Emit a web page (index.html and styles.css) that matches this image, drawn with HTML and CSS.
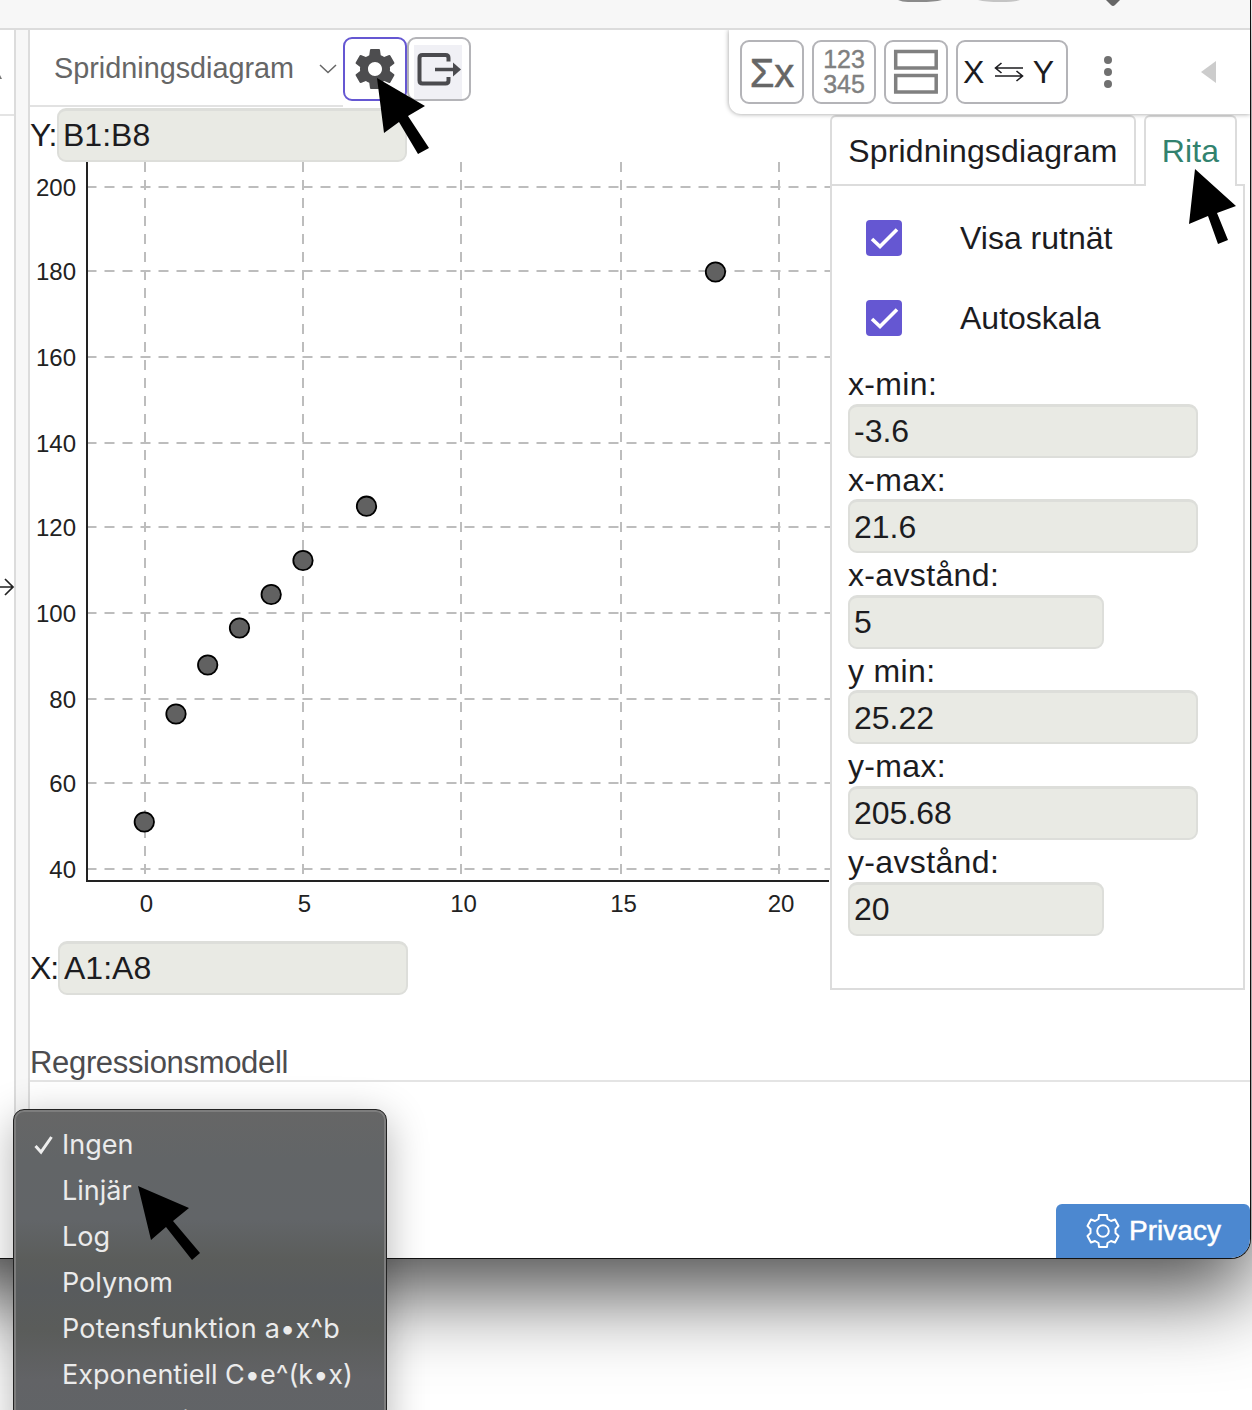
FILE: index.html
```html
<!doctype html>
<html lang="sv">
    <head>
        <meta charset="UTF-8">
        <meta name="viewport" content="width=device-width, initial-scale=1.0">
        <title>Spridningsdiagram</title>
        <link rel="stylesheet" href="styles.css">
    </head>
    <body>
        <div class="window">
            <header class="top-bar">
                <svg width="260" height="8" viewBox="890 0 260 8">
                    <path d="M898 0H942Q934 2 920 2H908Q902 2 898 0Z" fill="#8a8a8a"/>
                    <path d="M978 0H1020Q1016 2 1000 2Q986 2 978 0Z" fill="#c4c4c4"/>
                    <path d="M1106 0H1120L1115 5Q1113 7 1111 5Z" fill="#666"/>
                </svg>
            </header>

            <div class="content">
                <div class="left-view">
                    <div class="left-bar">
                        <svg width="2" height="6"><path d="M0 1L2 5H0Z" fill="#777"/></svg>
                    </div>
                    <svg class="left-arrow" width="15" height="20" viewBox="0 0 15 20">
                        <path d="M0 10H13M5 2L13 10L5 18" fill="none" stroke="#222" stroke-width="1.7"/>
                    </svg>
                </div>
                <div class="divider"></div>

                <main class="data-view">
                    <div class="toolbars">
                        <div class="plot-select">
                            <span>Spridningsdiagram</span>
                            <svg width="18" height="12" viewBox="0 0 18 12"><path d="M1 2L9 9.5L17 2" fill="none" stroke="#666" stroke-width="1.5"/></svg>
                        </div>
                        <button class="tool active">
                            <svg width="48" height="48" viewBox="0 0 24 24"><path fill="#4d4d4f" d="M19.43 12.98c.04-.32.07-.64.07-.98s-.03-.66-.07-.98l2.11-1.65c.19-.15.24-.42.12-.64l-2-3.46c-.12-.22-.39-.3-.61-.22l-2.49 1c-.52-.4-1.08-.73-1.69-.98l-.38-2.65C14.46 2.18 14.25 2 14 2h-4c-.25 0-.46.18-.49.42l-.38 2.65c-.61.25-1.17.59-1.69.98l-2.49-1c-.23-.09-.49 0-.61.22l-2 3.46c-.13.22-.07.49.12.64l2.11 1.65c-.04.32-.07.65-.07.98s.03.66.07.98l-2.11 1.65c-.19.15-.24.42-.12.64l2 3.46c.12.22.39.3.61.22l2.49-1c.52.4 1.08.73 1.69.98l.38 2.65c.03.24.24.42.49.42h4c.25 0 .46-.18.49-.42l.38-2.65c.61-.25 1.17-.59 1.69-.98l2.49 1c.23.09.49 0 .61-.22l2-3.46c.12-.22.07-.49-.12-.64l-2.11-1.65zM12 15.5c-1.93 0-3.5-1.57-3.5-3.5s1.57-3.5 3.5-3.5 3.5 1.57 3.5 3.5-1.57 3.5-3.5 3.5z"/></svg>
                        </button>
                        <button class="tool export">
                            <svg width="48" height="54" viewBox="0 0 48 54">
                                <rect width="48" height="54" fill="#f0f0f5"/>
                                <path d="M34.500 16.500V13Q34.500 10 31.500 10H8.500Q5.500 10 5.500 13V35.500Q5.500 38.500 8.500 38.500H31.500Q34.500 38.500 34.500 35.500V32" fill="none" stroke="#4a4a4e" stroke-width="4"/>
                                <path d="M21 24.500H41" stroke="#4a4a4e" stroke-width="3.500"/>
                                <path d="M39 17.500L47 24.500L39 31.500Z" fill="#4a4a4e"/>
                            </svg>
                        </button>

                        <div class="stat-tools">
                            <button class="tool sum">Σx</button>
                            <button class="tool digits"><span>123</span><span>345</span></button>
                            <button class="tool">
                                <svg width="46" height="46" viewBox="0 0 46 46" fill="none" stroke="#808080" stroke-width="3.500"><rect x="2.700" y="2.500" width="40.500" height="16.500"/><rect x="2.700" y="26.500" width="40.500" height="16.500"/></svg>
                            </button>
                            <button class="tool swap">
                                <span>X</span>
                                <svg width="30" height="20" viewBox="0 0 30 20" fill="none" stroke="#1c1c1f" stroke-width="1.600"><path d="M29 6H1M7.500 1L1.500 6L7.500 11M1 14H29M22.500 9L28.500 14L22.500 19"/></svg>
                                <span>Y</span>
                            </button>
                            <svg class="dots" width="10" height="34" viewBox="0 0 10 34" fill="#707070"><circle cx="5" cy="5" r="4"/><circle cx="5" cy="17" r="4"/><circle cx="5" cy="29" r="4"/></svg>
                            <svg class="collapse" width="15" height="22" viewBox="0 0 15 22"><path d="M0 11L15 0V22Z" fill="#ccc"/></svg>
                        </div>
                    </div>

                    <div class="plot-row">
                        <section class="plot">
                            <label class="range range-y"><span>Y:</span><input type="text" value="B1:B8"></label>
                            <svg class="chart" width="800" height="778" viewBox="30 162 800 778">
                                <g class="grid-x">
                                    <path d="M86.500 187H830M86.500 271H830M86.500 357H830M86.500 443H830M86.500 527H830M86.500 613H830M86.500 699H830M86.500 783H830M86.500 869H830"/>
                                </g>
                                <g class="grid-y">
                                    <path d="M145 162V880M303 162V880M461 162V880M621 162V880M779 162V880"/>
                                </g>
                                <path class="axis" d="M87 162V881H829"/>
                                <g class="labels-y">
                                    <text x="76" y="196">200</text>
                                    <text x="76" y="280">180</text>
                                    <text x="76" y="366">160</text>
                                    <text x="76" y="452">140</text>
                                    <text x="76" y="536">120</text>
                                    <text x="76" y="622">100</text>
                                    <text x="76" y="708">80</text>
                                    <text x="76" y="792">60</text>
                                    <text x="76" y="878">40</text>
                                </g>
                                <g class="labels-x">
                                    <text x="146.500" y="912">0</text>
                                    <text x="304.500" y="912">5</text>
                                    <text x="463.500" y="912">10</text>
                                    <text x="623.500" y="912">15</text>
                                    <text x="781" y="912">20</text>
                                </g>
                                <g class="points">
                                    <circle cx="144.300" cy="822" r="9.700"/>
                                    <circle cx="176" cy="714" r="9.700"/>
                                    <circle cx="207.700" cy="665" r="9.700"/>
                                    <circle cx="239.500" cy="628" r="9.700"/>
                                    <circle cx="271.200" cy="594.500" r="9.700"/>
                                    <circle cx="303" cy="560.500" r="9.700"/>
                                    <circle cx="366.500" cy="506.200" r="9.700"/>
                                    <circle cx="715.500" cy="272" r="9.700"/>
                                </g>
                            </svg>
                            <label class="range range-x"><span>X:</span><input type="text" value="A1:A8"></label>
                        </section>

                        <aside class="options">
                            <div class="tabs">
                                <div class="tab">Spridningsdiagram</div>
                                <div class="tab-gap"></div>
                                <div class="tab selected">Rita</div>
                                <div class="tab-rest"></div>
                            </div>
                            <div class="options-body">
                                <div class="check-row">
                                    <svg class="check" width="36" height="36" viewBox="0 0 36 36"><path d="M6 19L14 26.500L31 9.500" fill="none" stroke="#fff" stroke-width="3.600"/></svg>
                                    <span>Visa rutnät</span>
                                </div>
                                <div class="check-row">
                                    <svg class="check" width="36" height="36" viewBox="0 0 36 36"><path d="M6 19L14 26.500L31 9.500" fill="none" stroke="#fff" stroke-width="3.600"/></svg>
                                    <span>Autoskala</span>
                                </div>
                                <div class="fields">
                                    <label><span>x-min:</span><input type="text" value="-3.6"></label>
                                    <label><span>x-max:</span><input type="text" value="21.6"></label>
                                    <label><span>x-avstånd:</span><input class="short" type="text" value="5"></label>
                                    <label><span>y min:</span><input type="text" value="25.22"></label>
                                    <label><span>y-max:</span><input type="text" value="205.68"></label>
                                    <label><span>y-avstånd:</span><input class="short" type="text" value="20"></label>
                                </div>
                            </div>
                        </aside>
                    </div>

                    <h2 class="regression">Regressionsmodell</h2>

                    <button class="privacy">
                        <svg width="34" height="36" viewBox="-17 -18 34 36" fill="none" stroke="#fff" stroke-width="2" stroke-linejoin="round">
                            <path d="M-4 -16H4L4.500 -12L8 -10L12 -11.500L15.500 -5L12.500 -2V2L15.500 5L12 11.500L8 10L4.500 12L4 16H-4L-4.500 12L-8 10L-12 11.500L-15.500 5L-12.500 2V-2L-15.500 -5L-12 -11.500L-8 -10L-4.500 -12Z"/>
                            <circle r="5.800"/>
                        </svg>
                        <span>Privacy</span>
                    </button>
                </main>
            </div>
        </div>

        <!-- Regression model menu -->
        <ul class="menu">
            <li class="checked"><svg width="19" height="19" viewBox="0 0 19 19"><path d="M1.500 10L7 16L17.500 1" fill="none" stroke="#eee" stroke-width="3"/></svg>Ingen</li>
            <li>Linjär</li>
            <li>Log</li>
            <li>Polynom</li>
            <li class="wide">Potensfunktion a•x^b</li>
            <li>Exponentiell C•e^(k•x)</li>
            <li>Exponentiell C•a^x</li>
        </ul>

        <!-- Pointers -->
        <svg class="pointer pointer-gear" width="54" height="78"><path d="M0 0L48 28L31 38L52 70L41 76L22 44L7 55Z"/></svg>
        <svg class="pointer pointer-tab" width="50" height="78"><path d="M6 0L47 37L28 44L39 71L29 75L19 47L0 55Z"/></svg>
        <svg class="pointer pointer-menu" width="64" height="76"><path d="M0 0L51 22L35 35L62 67L54 74L28 41L13 54Z"/></svg>
    </body>
</html>
```

FILE: styles.css
```css
:root {
    --line: #dcdcdc;
    --text: #1c1c1f;
    --accent: #6557d2;
    --field: #e9eae4;
}
* {
    box-sizing: border-box;
}
html, body {
    height: 1410px;
    overflow: hidden;
}
body {
    position: relative;
    margin: 0;
    background: #fff;
    color: var(--text);
    font-family: "Liberation Sans", Arial, sans-serif;
    font-size: 32px;
}
button, input {
    font: inherit;
    color: inherit;
}
svg {
    display: block;
    flex: none;
}

/* The window runs past the left edge */
.window {
    display: flex;
    flex-direction: column;
    width: 1351px;
    height: 1259px;
    margin-left: -100px;
    background: #fff;
    border-right: 1px solid #111;
    border-bottom: 1px solid #111;
    border-bottom-right-radius: 20px;
    box-shadow: 0 34px 84px rgba(0, 0, 0, 0.7);
    overflow: hidden;
}
.top-bar {
    height: 30px;
    padding-left: 990px;
    background: #f7f7f7;
    border-bottom: 2px solid var(--line);
}
.content {
    flex: 1;
    display: flex;
}
.left-view {
    width: 116px;
    padding-left: 100px;
    border-right: 2px solid var(--line);
}
.left-bar {
    height: 86px;
    padding-top: 44px;
    border-bottom: 2px solid #e4e4e4;
}
.left-arrow {
    margin-top: 461px;
}
.divider {
    width: 14px;
    background: #f7f7f7;
    border-right: 2px solid var(--line);
}
.data-view {
    flex: 1;
    display: flex;
    flex-direction: column;
}

/* Toolbars */
.toolbars {
    position: relative;
    display: flex;
    height: 85px;
}
.plot-select {
    display: flex;
    align-items: center;
    justify-content: space-between;
    width: 313px;
    height: 77px;
    padding: 2px 6px 0 24px;
    border-bottom: 2px solid #e2e2e2;
    color: #666;
    font-size: 28.8px;
}
.tool {
    display: flex;
    align-items: center;
    justify-content: center;
    width: 64px;
    height: 64px;
    padding: 0;
    border: 2px solid #b4b4b8;
    border-radius: 9px;
    background: #fff;
}
.toolbars > .tool {
    margin-top: 7px;
}
.tool.active {
    border-color: var(--accent);
}
.tool.export {
    align-items: flex-end;
    padding-right: 2px;
}
.stat-tools {
    display: flex;
    align-items: flex-start;
    gap: 8px;
    width: 521px;
    height: 84px;
    margin-left: auto;
    padding: 10px 34px 0 11px;
    background: #fff;
    border-bottom-left-radius: 12px;
    box-shadow: 0 0 5px rgba(0, 0, 0, 0.4);
    clip-path: inset(0 0 -8px -8px);
}
.tool.sum {
    padding-top: 3px;
    color: #666;
    font-size: 40px;
    -webkit-text-stroke: 0.5px #666;
}
.tool.digits {
    flex-direction: column;
    color: #808080;
    font-size: 25px;
    line-height: 25px;
    -webkit-text-stroke: 0.4px #808080;
}
.tool.swap {
    width: 112px;
    justify-content: space-between;
    padding: 0 12px 0 5px;
}
.dots {
    margin: 15px 0 0 27px;
}
.collapse {
    margin: 21px 0 0 auto;
}

/* Plot and its ranges */
.plot-row {
    display: flex;
    height: 875px;
}
.plot {
    width: 800px;
    margin-top: -8px;
}
.range {
    display: flex;
    align-items: center;
    height: 55px;
}
.range span {
    width: 28px;
    padding-top: 2px;
    letter-spacing: -1px;
}
input {
    display: block;
    width: 350px;
    height: 54px;
    padding: 1px 0 0 4px;
    border: 2px solid #dddeda;
    border-top-width: 3px;
    border-radius: 9px;
    background: var(--field);
    outline: none;
}
.range-y input {
    margin-left: -1px;
}
.grid-x, .grid-y {
    fill: none;
    stroke: #bdbdbd;
    stroke-width: 2;
    stroke-dasharray: 10 8;
}
.axis {
    fill: none;
    stroke: #222;
    stroke-width: 2;
}
.chart text {
    font-size: 24px;
    fill: #222;
}
.labels-y {
    text-anchor: end;
}
.labels-x {
    text-anchor: middle;
}
.points {
    fill: #616161;
    stroke: #000;
    stroke-width: 1.8;
}

/* Options panel */
.options {
    display: flex;
    flex-direction: column;
    width: 415px;
}
.tabs {
    display: flex;
    height: 71px;
}
.tab {
    width: 306px;
    padding-top: 14px;
    line-height: 40px;
    letter-spacing: 0.15px;
    border: 2px solid var(--line);
    border-radius: 6px 6px 0 0;
    text-align: center;
}
.tab.selected {
    width: 93px;
    border-bottom: 0;
    color: #32826e;
}
.tab-gap {
    width: 8px;
    border-bottom: 2px solid var(--line);
}
.tab-rest {
    flex: 1;
    border-bottom: 2px solid var(--line);
}
.options-body {
    flex: 1;
    padding-left: 16px;
    border: 2px solid var(--line);
    border-top: 0;
}
.check-row {
    display: flex;
    align-items: center;
    gap: 58px;
    height: 80px;
    padding-left: 18px;
}
.check-row:first-child {
    margin-top: 12px;
}
.check {
    background: var(--accent);
    border-radius: 4px;
}
.fields {
    margin-top: 4px;
}
.fields label {
    display: block;
    height: 95.6px;
}
.fields span {
    display: block;
    height: 41.6px;
    padding-top: 2px;
    line-height: 41.6px;
    letter-spacing: 0.35px;
}
.fields input.short {
    width: 256px;
}

.regression {
    height: 92px;
    margin: 0;
    padding-top: 54px;
    border-bottom: 2px solid #e4e4e4;
    color: #4c4c4f;
    font-size: 31px;
    font-weight: normal;
    line-height: 37px;
    letter-spacing: -0.33px;
}
.privacy {
    display: flex;
    align-items: center;
    justify-content: center;
    gap: 9px;
    width: 194px;
    height: 54px;
    margin: auto 0 0 auto;
    padding: 0 0 0 1px;
    border: 0;
    border-radius: 6px 6px 18px 0;
    background: #4c88d0;
    color: #fff;
    font-size: 28px;
    -webkit-text-stroke: 0.5px #fff;
}

/* Drop-down menu */
.menu {
    position: absolute;
    left: 13px;
    top: 1109px;
    width: 374px;
    height: 330px;
    margin: 0;
    padding: 12px 0 0 47px;
    list-style: none;
    background: linear-gradient(#666 0, #626567 50px, #626568 110px, #5b5d5b 150px, #585b5d 180px, #5a5c5a 220px, #626366 270px, #606467 100%);
    border: 1px solid #222;
    border-radius: 11px;
    box-shadow: inset 0 0 0 2px #7d7d7d, 0 10px 40px rgba(0, 0, 0, 0.3);
    color: #ebebeb;
    font-family: Inter, sans-serif;
    font-size: 27px;
    line-height: 46px;
    white-space: nowrap;
}
.menu li {
    padding-left: 1px;
}
.menu .wide {
    letter-spacing: 0.2px;
}
.menu .checked {
    display: flex;
    align-items: center;
    gap: 9px;
    margin-left: -27px;
    padding-left: 0;
}

/* Arrows that lie over the page */
.pointer {
    position: absolute;
    fill: #000;
}
.pointer-gear {
    left: 377px;
    top: 78px;
}
.pointer-tab {
    left: 1189px;
    top: 169px;
}
.pointer-menu {
    left: 138px;
    top: 1186px;
}
```
